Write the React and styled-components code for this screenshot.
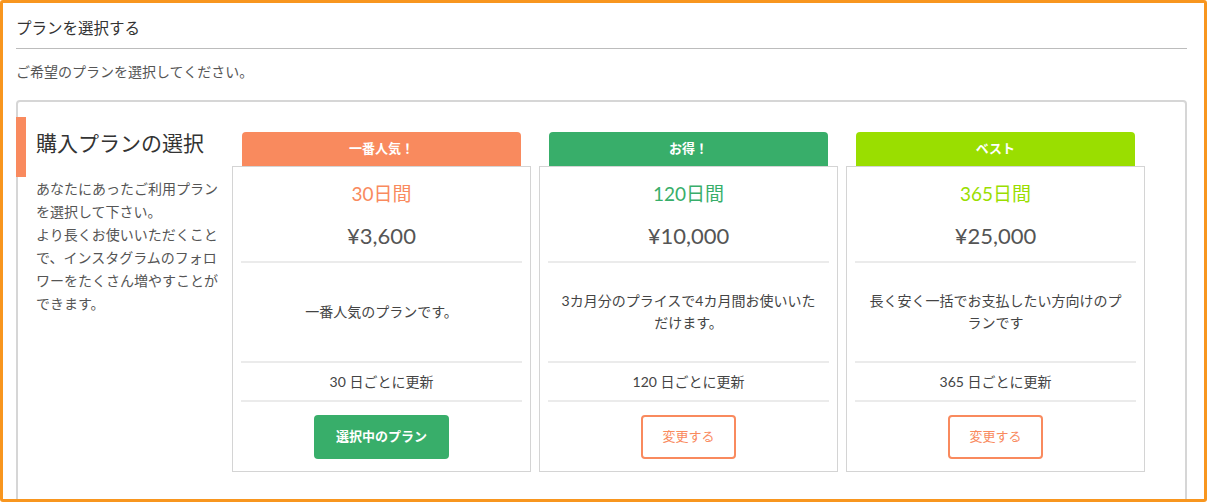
import React from 'react';
import styled, { createGlobalStyle } from 'styled-components';

const GlobalStyle = createGlobalStyle`
  * {
    box-sizing: border-box;
  }
  body {
    margin: 0;
    background: #fff;
    font-family: Lato, "Noto Sans CJK JP", sans-serif;
    color: #555;
  }
`;

const Frame = styled.div`
  height: 502px;
  overflow: hidden;
  border: 3px solid #f8961f;
  border-radius: 3px;
  padding: 15px 17px 0 13px;
`;

const PageTitle = styled.h1`
  margin: 0;
  padding-bottom: 10px;
  border-bottom: 1px solid #bcbcbc;
  font-size: 15.5px;
  line-height: 20px;
  font-weight: normal;
  color: #333;
`;

const Lead = styled.p`
  margin: 13px 0 18px;
  font-size: 14px;
  line-height: 20px;
  color: #555;
`;

const Panel = styled.section`
  display: flex;
  border: 2px solid #d6d6d6;
  border-radius: 4px;
  padding: 15px 0 30px;
`;

const Side = styled.div`
  width: 216px;
  flex-shrink: 0;
  margin-left: -2px;
`;

const SideHeading = styled.h2`
  margin: 0;
  height: 60px;
  padding: 12px 0 0 10px;
  border-left: 10px solid #f98a5e;
  font-size: 21px;
  line-height: 28px;
  font-weight: normal;
  color: #333;
`;

const SideText = styled.p`
  margin: 0;
  padding: 0 10px 0 20px;
  font-size: 14px;
  line-height: 23px;
  color: #555;
`;

const Plans = styled.div`
  display: flex;
  gap: 8px;
  padding-top: 15px;
`;

const PlanColumn = styled.div`
  width: 299px;
  display: flex;
  flex-direction: column;
`;

const Badge = styled.div`
  margin: 0 10px;
  height: 34px;
  border-radius: 4px 4px 0 0;
  background: ${(p) => p.$color};
  color: #fff;
  font-size: 13px;
  font-weight: bold;
  line-height: 32px;
  text-align: center;
`;

const Card = styled.div`
  border: 1px solid #d4d4d4;
  padding: 0 8px 12px;
  text-align: center;
`;

const CardHead = styled.div`
  padding: 14px 0 10px;
  border-bottom: 2px solid #ebebeb;
`;

const Period = styled.div`
  font-size: 19px;
  line-height: 26px;
  color: ${(p) => p.$color};
`;

const Price = styled.div`
  margin-top: 14px;
  font-size: 22px;
  line-height: 30px;
  color: #555;
`;

const Description = styled.div`
  height: 100px;
  display: flex;
  align-items: center;
  justify-content: center;
  padding: 0 12px;
  border-bottom: 2px solid #ebebeb;
  font-size: 14px;
  line-height: 22px;
  color: #444;
`;

const Renewal = styled.div`
  height: 39px;
  line-height: 37px;
  border-bottom: 2px solid #ebebeb;
  font-size: 14px;
  color: #444;
`;

const ButtonRow = styled.div`
  display: flex;
  justify-content: center;
  padding-top: 13px;
`;

const CurrentButton = styled.button`
  width: 135px;
  height: 44px;
  padding: 0 0 3px;
  border: none;
  border-radius: 4px;
  background: #38ae6a;
  color: #fff;
  font-family: inherit;
  font-size: 13px;
  font-weight: bold;
`;

const ChangeButton = styled.button`
  width: 95px;
  height: 44px;
  padding: 0 0 3px;
  border: 2px solid #f98a5e;
  border-radius: 4px;
  background: #fff;
  color: #f98a5e;
  font-family: inherit;
  font-size: 13px;
`;

const plans = [
  {
    badge: '一番人気！',
    color: '#f98a5e',
    period: '30日間',
    price: '¥3,600',
    description: '一番人気のプランです。',
    renewal: '30 日ごとに更新',
    current: true,
  },
  {
    badge: 'お得！',
    color: '#38ae6a',
    period: '120日間',
    price: '¥10,000',
    description: '3カ月分のプライスで4カ月間お使いいただけます。',
    renewal: '120 日ごとに更新',
  },
  {
    badge: 'ベスト',
    color: '#9ade00',
    period: '365日間',
    price: '¥25,000',
    description: '長く安く一括でお支払したい方向けのプランです',
    renewal: '365 日ごとに更新',
  },
];

const PlanCard = ({ plan }) => (
  <PlanColumn>
    <Badge $color={plan.color}>{plan.badge}</Badge>
    <Card>
      <CardHead>
        <Period $color={plan.color}>{plan.period}</Period>
        <Price>{plan.price}</Price>
      </CardHead>
      <Description>{plan.description}</Description>
      <Renewal>{plan.renewal}</Renewal>
      <ButtonRow>
        {plan.current ? (
          <CurrentButton>選択中のプラン</CurrentButton>
        ) : (
          <ChangeButton>変更する</ChangeButton>
        )}
      </ButtonRow>
    </Card>
  </PlanColumn>
);

export default function App() {
  return (
    <>
      <GlobalStyle />
      <Frame>
        <PageTitle>プランを選択する</PageTitle>
        <Lead>ご希望のプランを選択してください。</Lead>
        <Panel>
          <Side>
            <SideHeading>購入プランの選択</SideHeading>
            <SideText>
              あなたにあったご利用プランを選択して下さい。
              <br />
              より長くお使いいただくことで、インスタグラムのフォロワーをたくさん増やすことができます。
            </SideText>
          </Side>
          <Plans>
            {plans.map((plan) => (
              <PlanCard key={plan.period} plan={plan} />
            ))}
          </Plans>
        </Panel>
      </Frame>
    </>
  );
}
